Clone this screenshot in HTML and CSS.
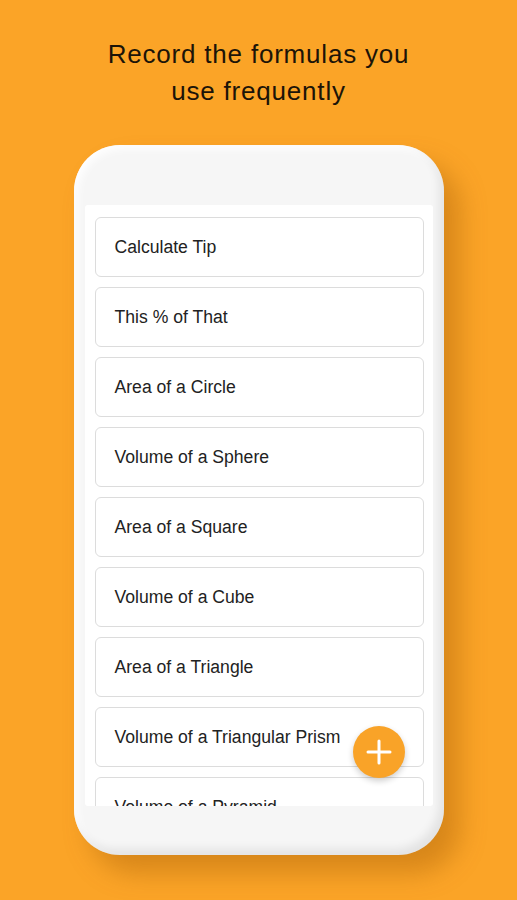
FILE: index.html
```html
<!DOCTYPE html>
<html lang="en">
<head>
  <meta charset="UTF-8" />
  <title>Formulas</title>
  <link rel="stylesheet" href="styles.css">
</head>
<body>
  <h1 class="headline">Record the formulas you<br>use frequently</h1>

  <div class="phone">
    <div class="screen">
      <ul class="formula-list">
        <li class="formula">Calculate Tip</li>
        <li class="formula">This % of That</li>
        <li class="formula">Area of a Circle</li>
        <li class="formula">Volume of a Sphere</li>
        <li class="formula">Area of a Square</li>
        <li class="formula">Volume of a Cube</li>
        <li class="formula">Area of a Triangle</li>
        <li class="formula">Volume of a Triangular Prism</li>
        <li class="formula">Volume of a Pyramid</li>
      </ul>
    </div>
    <!-- add button floats over the list -->
    <button class="fab" aria-label="Add formula">
      <svg width="28" height="28" viewBox="0 0 28 28">
        <path d="M14 3v22M3 14h22" stroke="#fff" stroke-width="3" stroke-linecap="round" fill="none"/>
      </svg>
    </button>
  </div>
</body>
</html>
```

FILE: styles.css
```css
* {
  box-sizing: border-box;
}

body {
  margin: 0;
  background: #fba427;
  font-family: 'Liberation Sans', Arial, sans-serif;
  min-height: 900px;
  overflow: hidden;
}

.headline {
  margin: 0;
  padding-top: 36px;
  text-align: center;
  font-family: 'Liberation Sans', Arial, sans-serif;
  font-weight: 400;
  font-size: 26px;
  line-height: 37px;
  letter-spacing: 0.8px;
  color: #1c1408;
}

.phone {
  position: relative;
  width: 370px;
  margin: 35px auto 0;
  padding: 60px 11px 49px;
  background: #f6f6f6;
  border-radius: 46px;
  box-shadow:
    inset -5px -6px 10px rgba(0, 0, 0, 0.08),
    inset 4px 4px 8px rgba(255, 255, 255, 0.9),
    16px 18px 26px rgba(150, 80, 0, 0.35);
}

.screen {
  height: 601px;
  overflow: hidden;
  background: #fff;
  border-radius: 3px;
  padding: 12px 9px 0 10px;
}

.formula-list {
  list-style: none;
  margin: 0;
  padding: 0;
  display: flex;
  flex-direction: column;
  gap: 10px;
}

.formula {
  height: 60px;
  flex-shrink: 0;
  display: flex;
  align-items: center;
  padding-left: 19px;
  border: 1px solid #dcdcdc;
  border-radius: 6px;
  font-size: 17.6px;
  color: #222;
}

.fab {
  position: absolute;
  left: 279px;
  top: 581px;
  width: 52px;
  height: 52px;
  border: none;
  border-radius: 50%;
  background: #f9a328;
  display: flex;
  align-items: center;
  justify-content: center;
  padding: 0;
  box-shadow: 0 3px 6px rgba(0, 0, 0, 0.2);
}
```
